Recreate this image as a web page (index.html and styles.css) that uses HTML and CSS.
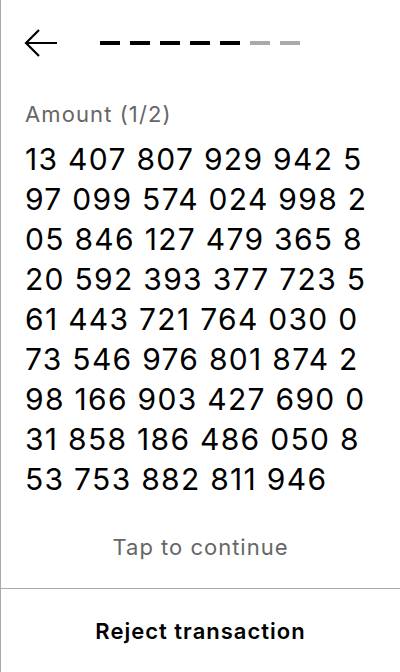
FILE: index.html
```html
<!DOCTYPE html>
<html>
<head>
<meta charset="utf-8">
<link rel="stylesheet" href="styles.css">
</head>
<body>
<div class="screen">
  <div class="header">
    <svg class="back" width="34" height="30" viewBox="0 0 34 30">
      <path d="M33 15 H3 M15 2 L2 15 L15 28" fill="none" stroke="#000" stroke-width="2.2"/>
    </svg>
    <div class="steps">
      <span class="dash on"></span>
      <span class="dash on"></span>
      <span class="dash on"></span>
      <span class="dash on"></span>
      <span class="dash on"></span>
      <span class="dash"></span>
      <span class="dash"></span>
    </div>
  </div>
  <div class="content">
    <div class="label">Amount (1/2)</div>
    <div class="amount">
      <div>13 407 807 929 942 5</div>
      <div>97 099 574 024 998 2</div>
      <div>05 846 127 479 365 8</div>
      <div>20 592 393 377 723 5</div>
      <div>61 443 721 764 030 0</div>
      <div>73 546 976 801 874 2</div>
      <div>98 166 903 427 690 0</div>
      <div>31 858 186 486 050 8</div>
      <div>53 753 882 811 946</div>
    </div>
  </div>
  <div class="tap">Tap to continue</div>
  <div class="reject">Reject transaction</div>
</div>
</body>
</html>
```
FILE: styles.css
```css
html, body {
  margin: 0;
  padding: 0;
  background: #fff;
}
.screen {
  box-sizing: border-box;
  width: 400px;
  height: 672px;
  border-left: 1px solid #aaa;
  display: flex;
  flex-direction: column;
  font-family: Inter, "Noto Sans", sans-serif;
  color: #000;
}
.header {
  display: flex;
  align-items: center;
  padding: 28px 0 0 23px;
  height: 30px;
}
.back {
  display: block;
}
.steps {
  display: flex;
  gap: 10px;
  margin-left: 42px;
}
.dash {
  width: 20px;
  height: 4px;
  background: #aaa;
}
.dash.on {
  background: #000;
}
.content {
  flex: 1;
  padding: 43px 0 0 24px;
}
.label {
  font-size: 22px;
  line-height: 26px;
  letter-spacing: 1.1px;
  color: #666;
}
.amount {
  margin-top: 12px;
  font-size: 30px;
  line-height: 40px;
  letter-spacing: 1.3px;
}
.tap {
  text-align: center;
  font-size: 22px;
  line-height: 26px;
  letter-spacing: 1px;
  color: #666;
  padding-bottom: 28px;
}
.reject {
  border-top: 1px solid #aaa;
  height: 83px;
  display: flex;
  align-items: center;
  justify-content: center;
  font-size: 22px;
  font-weight: 600;
  letter-spacing: 1px;
}
```
